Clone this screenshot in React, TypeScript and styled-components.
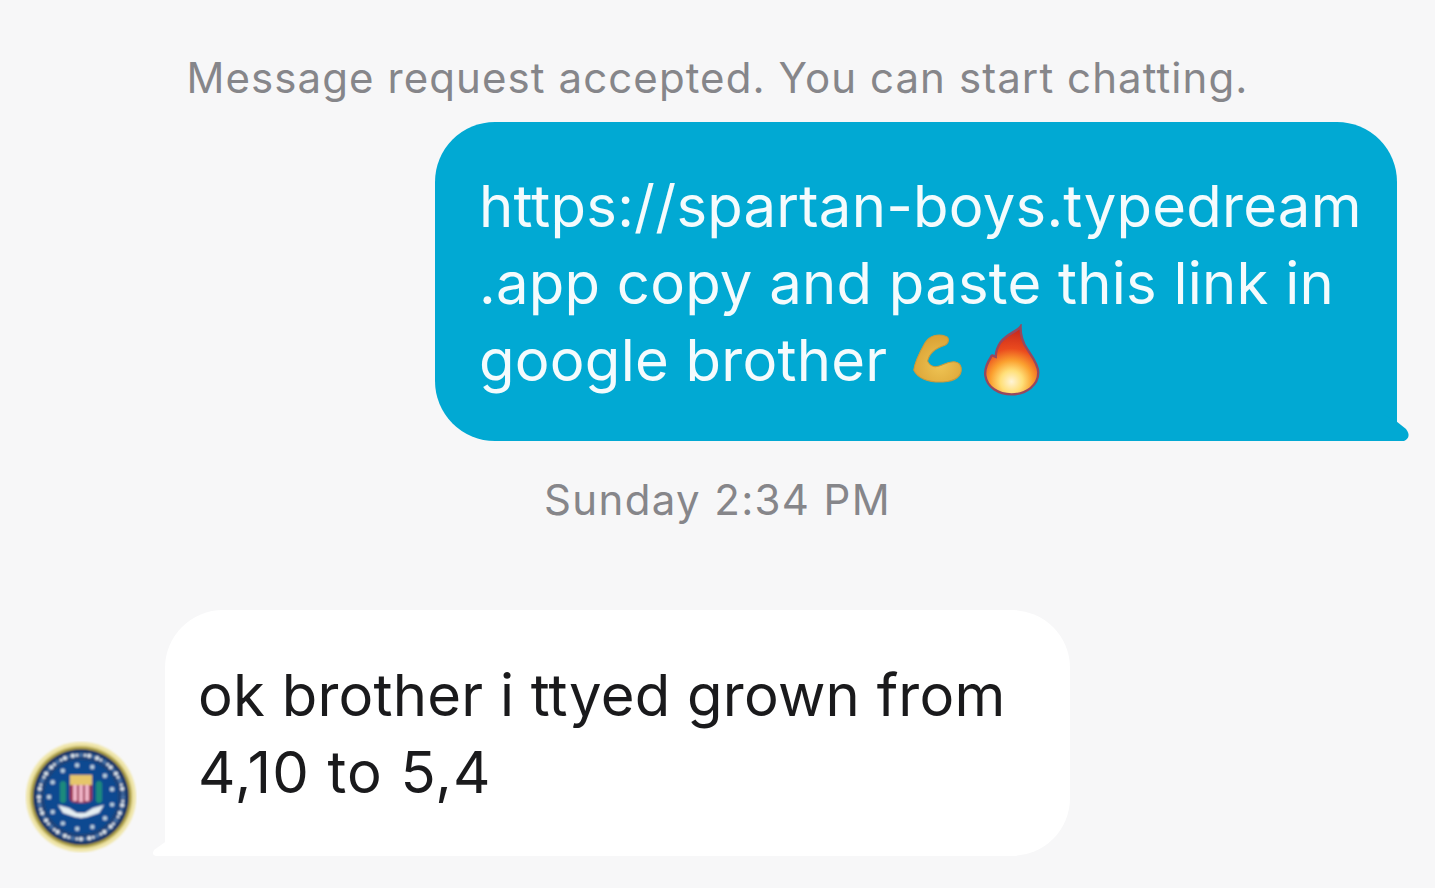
import React from "react";
import styled, { createGlobalStyle } from "styled-components";

const Global = createGlobalStyle`
  html, body { margin: 0; padding: 0; background: #f7f7f8; }
  body { font-family: Inter, "Liberation Sans", sans-serif; }
`;

const Thread = styled.main`
  width: 1435px;
  height: 888px;
  box-sizing: border-box;
  overflow: hidden;
  background: #f7f7f8;
  display: flex;
  flex-direction: column;
  padding-top: 50px;
`;

const Notice = styled.div<{ $mt?: number; $ls: number }>`
  align-self: center;
  margin-top: ${(p) => p.$mt ?? 0}px;
  font-size: 42px;
  line-height: 56px;
  color: #86868a;
  white-space: nowrap;
  font-family: Inter, sans-serif;
  letter-spacing: ${(p) => p.$ls}px;
`;

const Row = styled.div<{ $end?: boolean; $mt?: number }>`
  display: flex;
  align-items: flex-end;
  justify-content: ${(p) => (p.$end ? "flex-end" : "flex-start")};
  margin-top: ${(p) => p.$mt ?? 0}px;
`;

const Bubble = styled.div`
  position: relative;
  font-family: Inter, sans-serif;
  font-size: 58px;
  line-height: 77px;
  letter-spacing: 0.24px;
  white-space: nowrap;
`;

const Sent = styled(Bubble)`
  width: 962px;
  height: 319px;
  box-sizing: border-box;
  margin-right: 38px;
  padding: 46px 0 0 44px;
  background: #01a9d3;
  color: #f4fbfd;
  border-radius: 60px 60px 0 60px;
  &::after {
    content: "";
    position: absolute;
    right: -13px;
    bottom: 0;
    width: 26px;
    height: 26px;
    background: #01a9d3;
    clip-path: path("M0 0 L12 6 L22 14 Q28 22 20 26 L0 26 Z");
  }
`;

const Received = styled(Bubble)`
  width: 905px;
  height: 246px;
  box-sizing: border-box;
  margin-left: 28px;
  padding: 47px 0 0 33px;
  background: #ffffff;
  color: #1a1a1c;
  border-radius: 58px 58px 58px 0;
  &::after {
    content: "";
    position: absolute;
    left: -13px;
    bottom: 0;
    width: 16px;
    height: 16px;
    background: #ffffff;
    clip-path: path("M16 0 L2 10 Q-1 15 4 16 L16 16 Z");
  }
`;

const Line = styled.div<{ $ls?: number }>`
  height: 77px;
  letter-spacing: ${(p) => p.$ls ?? 0.24}px;
`;

const EmojiLine = styled(Line)`
  display: flex;
  align-items: center;
`;

const MuscleIcon = styled.svg`
  flex: none;
  margin: 0 0 5px 25px;
`;

const FireIcon = styled.svg`
  flex: none;
  margin: 0 0 2px 19px;
`;

const Muscle = () => (
  <MuscleIcon width="52" height="52" viewBox="75 68 150 150">
    <defs>
      <radialGradient id="arm" cx="55%" cy="65%" r="60%">
        <stop offset="0%" stopColor="#efc454" />
        <stop offset="100%" stopColor="#dca436" />
      </radialGradient>
    </defs>
    <path
      d="M172 80 C150 72 125 78 112 100 C98 125 84 150 80 178 C90 200 120 214 165 212 C200 210 220 195 217 172 C214 150 190 150 165 162 C145 172 128 170 120 152 C124 132 138 116 170 106 C182 100 184 84 172 80 Z"
      fill="url(#arm)"
      stroke="#c99a3c"
      strokeWidth="3"
    />
  </MuscleIcon>
);

const Fire = () => (
  <FireIcon width="57" height="72" viewBox="280 40 170 215">
    <defs>
      <radialGradient id="flame" gradientUnits="userSpaceOnUse" cx="365" cy="212" r="150">
        <stop offset="0%" stopColor="#fff4d6" />
        <stop offset="22%" stopColor="#ffdf78" />
        <stop offset="42%" stopColor="#fba02f" />
        <stop offset="66%" stopColor="#ea4a1e" />
        <stop offset="100%" stopColor="#cb2b1c" />
      </radialGradient>
    </defs>
    <path
      d="M392 48 C385 60 350 70 332 95 C322 110 318 125 318 138 C310 135 306 130 303 140 C290 160 284 175 287 195 C292 228 325 250 365 250 C410 250 445 222 445 185 C445 160 425 135 412 115 C398 95 392 75 392 48 Z"
      fill="url(#flame)"
      stroke="#96485f"
      strokeWidth="7"
    />
  </FireIcon>
);

const SealWrap = styled.div`
  flex: none;
  display: flex;
  width: 112px;
  height: 112px;
  margin: 0 0 3px 25px;
`;

const Seal = () => (
  <SealWrap>
    <svg width="112" height="112" viewBox="0 0 112 112">
      <defs>
        <filter id="soft"><feGaussianBlur stdDeviation="0.8" /></filter>
      </defs>
      <g filter="url(#soft)">
        <circle cx="56" cy="56" r="55" fill="#efe5a8" />
        <circle cx="56" cy="56" r="51" fill="#b3a548" />
        <circle cx="56" cy="56" r="48" fill="#11295a" />
        <circle cx="56" cy="56" r="46" fill="#1d4279" />
        {Array.from({ length: 64 }).map((_, i) => {
          const a = (i / 64) * Math.PI * 2;
          return (
            <circle
              key={i}
              cx={56 + Math.cos(a) * 42}
              cy={56 + Math.sin(a) * 42}
              r={i % 2 ? 1.5 : 2.1}
              fill={i % 3 ? "#dfe7ee" : "#4a73a8"}
            />
          );
        })}
        <circle cx="56" cy="56" r="37" fill="#0e4a91" />
        {Array.from({ length: 13 }).map((_, i) => {
          const a = (i / 13) * Math.PI * 2 + 0.24;
          return <circle key={i} cx={56 + Math.cos(a) * 32} cy={56 + Math.sin(a) * 32} r="2.2" fill="#b9cfe0" />;
        })}
        <rect x="35" y="40" width="6" height="22" rx="3" fill="#1f8a7c" />
        <rect x="71" y="40" width="6" height="22" rx="3" fill="#1f8a7c" />
        <rect x="45" y="34" width="22" height="11" fill="#e6c66a" />
        <path d="M45 44 H67 V58 Q67 62 56 62 Q45 62 45 58 Z" fill="#9c2b4c" />
        <rect x="48" y="44" width="4" height="16" fill="#f0b3c8" />
        <rect x="54" y="44" width="4" height="17" fill="#f0b3c8" />
        <rect x="60" y="44" width="4" height="16" fill="#f0b3c8" />
        <path d="M33 64 L44 67 L52 72 L60 72 L68 67 L79 64 L74 72 L62 76 L56 77 L50 76 L38 72 Z" fill="#e6eef2" />
      </g>
    </svg>
  </SealWrap>
);

export default function App() {
  return (
    <>
      <Global />
      <Thread>
        <Notice $ls={1.08}>Message request accepted. You can start chatting.</Notice>
        <Row $end $mt={16}>
          <Sent>
            <Line>https://spartan-boys.typedream</Line>
            <Line>.app copy and paste this link in</Line>
            <EmojiLine>
              google brother
              <Muscle />
              <Fire />
            </EmojiLine>
          </Sent>
        </Row>
        <Notice $mt={31} $ls={1.35}>Sunday 2:34 PM</Notice>
        <Row $mt={82}>
          <Seal />
          <Received>
            <Line>ok brother i ttyed grown from</Line>
            <Line $ls={1.15}>4,10 to 5,4</Line>
          </Received>
        </Row>
      </Thread>
    </>
  );
}
